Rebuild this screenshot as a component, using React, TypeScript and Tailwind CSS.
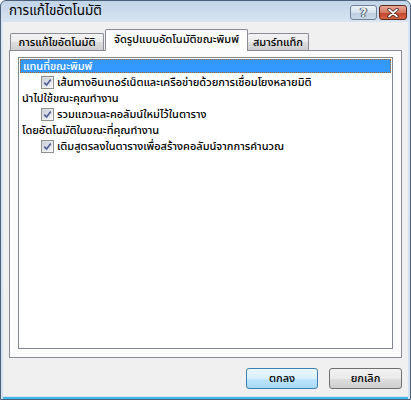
import { type ReactNode } from 'react';

const thai = "font-[Tahoma,'Noto_Sans_Thai','Noto_Sans_Thai_UI','Noto_Sans','DejaVu_Sans',sans-serif]";

function CheckBox() {
  return (
    <span className="flex h-[13px] w-[13px] shrink-0 items-center justify-center border border-[#8e8f8f] bg-[linear-gradient(135deg,#d8d8d8,#fdfdfd)] p-px">
      <span className="flex h-full w-full items-center justify-center bg-[linear-gradient(135deg,#c9ced6,#f4f5f7)]">
        <svg viewBox="0 0 9 9" className="h-[9px] w-[9px]">
          <path d="M1.3 4.6 L3.6 7 L7.8 1.4" fill="none" stroke="#4b5f94" strokeWidth="1.7" />
        </svg>
      </span>
    </span>
  );
}

function GroupRow({ children, selected }: { children: ReactNode; selected?: boolean }) {
  return (
    <div
      className={
        selected
          ? 'flex h-[14px] items-center border border-dotted border-[#b8611f] bg-[#3399ff] pl-[2px] text-white'
          : 'flex h-[14px] items-center border border-transparent pl-px text-black'
      }
    >
      {children}
    </div>
  );
}

function CheckRow({ children }: { children: ReactNode }) {
  return (
    <div className="flex h-[18px] items-center gap-[3px] pl-[21px] text-black">
      <CheckBox />
      <span>{children}</span>
    </div>
  );
}

export default function App() {
  return (
    <div className={`flex h-[400px] w-[411px] flex-col overflow-hidden rounded-t-[6px] border border-[#4b607a] bg-[linear-gradient(180deg,#c2d4e8,#d9e5f2_22px,#d3e1f0)] px-[2px] text-[11px] font-medium leading-none ${thai}`}>
      {/* title bar */}
      <div className="flex h-[21px] shrink-0 items-center justify-between pl-[6px] pr-[1px]">
        <span className="text-[13.5px] font-normal text-black">การแก้ไขอัตโนมัติ</span>
        <div className="flex items-center gap-[2px] pt-[2px]">
          <div className="flex h-[15px] w-[27px] items-center justify-center rounded-[3px] border border-[#6e8199] bg-[linear-gradient(180deg,#eef3f8,#d6e1ed_50%,#bccde0_51%,#cbd9e8)]">
            <span className="font-['DejaVu_Sans',sans-serif] text-[12px] font-bold text-[#f4f6f8] [text-shadow:0_0_1px_#2a3a4e,0_0_1px_#2a3a4e,1px_0_0_#45566b,-1px_0_0_#45566b]">
              ?
            </span>
          </div>
          <div className="flex h-[15px] w-[28px] items-center justify-center rounded-[3px] border border-[#5f2a1c] bg-[linear-gradient(180deg,#e9aa98,#d57a64_50%,#c2442a_51%,#d76447)]">
            <svg viewBox="0 0 14 10" className="h-[10px] w-[14px]">
              <path d="M3 1.5 L11 8.5 M11 1.5 L3 8.5" stroke="#3b1a12" strokeWidth="3.4" strokeLinecap="round" />
              <path d="M3 1.5 L11 8.5 M11 1.5 L3 8.5" stroke="#ffffff" strokeWidth="1.8" strokeLinecap="round" />
            </svg>
          </div>
        </div>
      </div>

      {/* client area */}
      <div className="flex h-[374px] shrink-0 flex-col bg-[#f0f0f0] px-[6px] pt-[7px]">
        {/* tabs */}
        <div className="relative z-10 flex h-[21px] items-end pl-px">
          <div className="flex h-[17px] w-[94px] items-center justify-center rounded-t-[2px] border border-b-0 border-[#898c95] bg-[linear-gradient(180deg,#f3f3f3,#ebebeb_50%,#dddddd_51%,#cfcfcf)] text-black">
            การแก้ไขอัตโนมัติ
          </div>
          <div className="-mb-px ml-px flex h-[22px] w-[143px] items-center justify-center rounded-t-[2px] border border-b-0 border-[#898c95] bg-[#fcfcfc] pb-[2px] text-black">
            จัดรูปแบบอัตโนมัติขณะพิมพ์
          </div>
          <div className="flex h-[17px] w-[61px] items-center justify-center rounded-t-[2px] border border-b-0 border-l-0 border-[#898c95] bg-[linear-gradient(180deg,#f3f3f3,#ebebeb_50%,#dddddd_51%,#cfcfcf)] text-black">
            สมาร์ทแท็ก
          </div>
        </div>

        {/* tab panel */}
        <div className="h-[308px] border border-[#898c95] bg-[#fcfcfc] px-[8px] pb-[8px] pt-[6px]">
          <div className="h-full border border-[#828790] bg-white p-px">
            <GroupRow selected>แทนที่ขณะพิมพ์</GroupRow>
            <CheckRow>เส้นทางอินเทอร์เน็ตและเครือข่ายด้วยการเชื่อมโยงหลายมิติ</CheckRow>
            <GroupRow>นำไปใช้ขณะคุณทำงาน</GroupRow>
            <CheckRow>รวมแถวและคอลัมน์ใหม่ไว้ในตาราง</CheckRow>
            <GroupRow>โดยอัตโนมัติในขณะที่คุณทำงาน</GroupRow>
            <CheckRow>เติมสูตรลงในตารางเพื่อสร้างคอลัมน์จากการคำนวณ</CheckRow>
          </div>
        </div>

        {/* buttons */}
        <div className="mt-[10px] flex justify-end gap-[11px]">
          <button className="flex h-[21px] w-[72px] items-center justify-center rounded-[3px] border border-[#3c7fb1] bg-[linear-gradient(180deg,#eaf6fd,#d9f0fc_50%,#bee6fd_51%,#a7d9f5)] text-black">
            ตกลง
          </button>
          <button className="flex h-[21px] w-[73px] items-center justify-center rounded-[3px] border border-[#707070] bg-[linear-gradient(180deg,#f2f2f2,#ebebeb_50%,#dddddd_51%,#cfcfcf)] text-black">
            ยกเลิก
          </button>
        </div>
      </div>
      <div className="mt-px h-[2px] shrink-0 bg-[#3fb6e6]" />
    </div>
  );
}
